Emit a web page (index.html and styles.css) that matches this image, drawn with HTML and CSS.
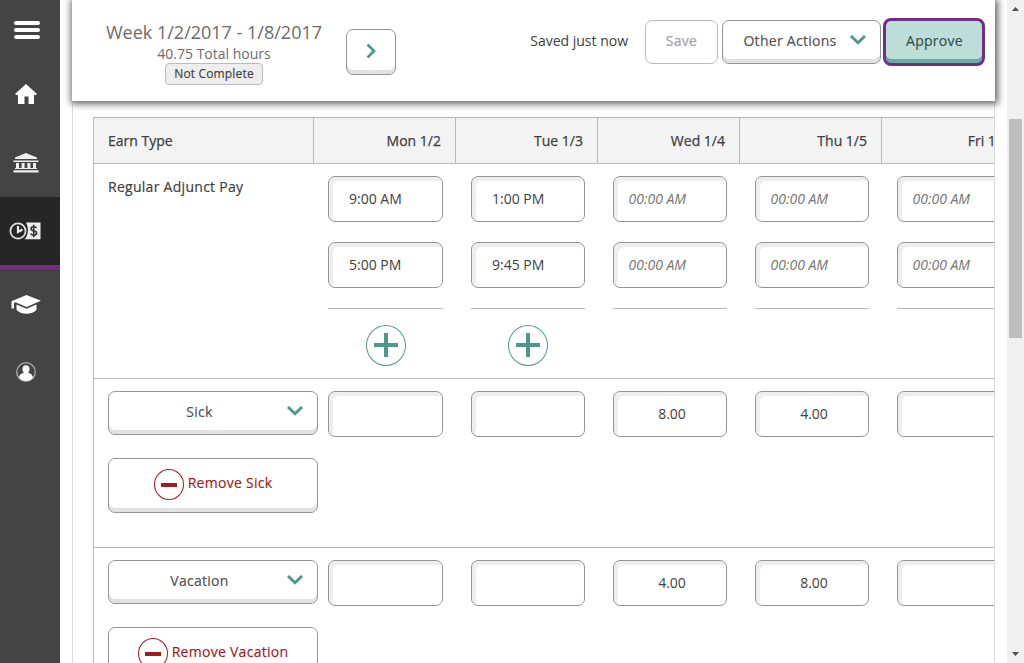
FILE: index.html
```html
<!DOCTYPE html>
<html lang="en">
<head>
<meta charset="utf-8">
<title>Timesheet</title>
<link rel="stylesheet" href="styles.css">
</head>
<body>
<div class="app">
  <nav class="sidebar">
    <a class="nav nav-menu"><svg width="26" height="20" viewBox="0 0 26 20"><path d="M2 3h22M2 10h22M2 17h22" stroke="#fff" stroke-width="4" stroke-linecap="round"/></svg></a>
    <a class="nav nav-home"><svg width="22" height="20" viewBox="0 0 22 20"><path fill="#fff" d="M11 0 22 10l-1.500 1.300L19 10.500V20h-5.500v-7.500h-4V20H3v-9.500L1.500 11.300 0 10z"/></svg></a>
    <a class="nav nav-bank"><svg width="26" height="20" viewBox="0 0 26 20"><path fill="#eee" d="M13 0 24 4.500V6H2V4.500zM0.500 7.500h25V9H0.500zM3 10h3v5H3zm5.600 0h3v5h-3zm5.800 0h3v5h-3zm5.600 0h3v5h-3zM2 15h22v1H2zM0.500 17.300h25v2.300H0.500z"/></svg></a>
    <a class="nav nav-time"><svg width="32" height="18" viewBox="0 0 32 18"><path fill="#eee" d="M17 .5h14.500v16.800H15.500c4-4 4.500-11 1.500-16.800z"/><circle cx="9" cy="9" r="7.600" fill="none" stroke="#ddd" stroke-width="1.800"/><path d="M9 4v6l4.500-2.500" fill="none" stroke="#eee" stroke-width="2.200"/><path d="M27.500 6c-.5-1.500-5.500-2-5.500.8s5.600 1.400 5.600 4.200-5.200 2.800-6 .6M24.700 2.700v12.500" fill="none" stroke="#333" stroke-width="1.600"/></svg></a>
    <a class="nav nav-school"><svg width="30" height="19" viewBox="0 0 30 19"><path fill="#fff" d="M15.500 0 30 5.800 15.500 12 4.500 7.200 3 8v5.500H.5V6.300zM5.500 9.500l10 4.200 10-4.200v5.300c-4 5.200-16 5.200-20 0z"/></svg></a>
    <a class="nav nav-user"><svg width="22" height="20" viewBox="0 0 22 20"><circle cx="11" cy="10" r="9.300" fill="none" stroke="#aaa" stroke-width="1.300"/><path fill="#fff" d="M11 3.300c2.300 0 3.500 1.700 3.500 3.800S13.600 10.300 13 10.800c2.600.8 4.800 1.800 4.800 4.900-3.300 4.300-10.300 4.300-13.600 0 0-3.100 2.200-4.100 4.800-4.900-.6-.5-1.500-1.600-1.500-3.700S8.700 3.300 11 3.300z"/></svg></a>
  </nav>
  <main class="page">
    <header class="topbar">
      <div class="period">
        <div class="week">Week 1/2/2017 - 1/8/2017</div>
        <div class="total">40.75 Total hours</div>
        <div class="badge">Not Complete</div>
      </div>
      <button class="btn next"><svg width="10" height="16" viewBox="0 0 10 16"><path d="M1.500 1.500 8 8 1.500 14.500" fill="none" stroke="#4d988c" stroke-width="2.700"/></svg></button>
      <div class="actions">
        <span class="saved">Saved just now</span>
        <button class="btn save">Save</button>
        <button class="btn other">Other Actions <svg width="16" height="10" viewBox="0 0 16 10"><path d="M1 1l7 6.700L15 1" fill="none" stroke="#4d988c" stroke-width="2.900"/></svg></button>
        <button class="btn approve">Approve</button>
      </div>
    </header>
    <section class="panel">
      <div class="sheet">
        <div class="row head">
          <div class="th first">Earn Type</div><div class="th">Mon 1/2</div><div class="th">Tue 1/3</div><div class="th">Wed 1/4</div><div class="th">Thu 1/5</div><div class="th">Fri 1/6</div>
        </div>
        <div class="row times">
          <div class="label">Regular Adjunct Pay</div>
          <div class="cell"><div class="input">9:00 AM</div><div class="input">5:00 PM</div><hr class="rule"><button class="add"><svg width="24" height="24"><path d="M12 0v24M0 12h24" stroke="#4d988c" stroke-width="4"/></svg></button></div>
          <div class="cell"><div class="input">1:00 PM</div><div class="input">9:45 PM</div><hr class="rule"><button class="add"><svg width="24" height="24"><path d="M12 0v24M0 12h24" stroke="#4d988c" stroke-width="4"/></svg></button></div>
          <div class="cell"><div class="input empty">00:00 AM</div><div class="input empty">00:00 AM</div><hr class="rule"></div>
          <div class="cell"><div class="input empty">00:00 AM</div><div class="input empty">00:00 AM</div><hr class="rule"></div>
          <div class="cell"><div class="input empty">00:00 AM</div><div class="input empty">00:00 AM</div><hr class="rule"></div>
        </div>
        <div class="row leave">
          <div class="label controls">
            <button class="btn select"><span class="choice">Sick</span><svg width="16" height="10" viewBox="0 0 16 10"><path d="M1 1l7 6.700L15 1" fill="none" stroke="#4d988c" stroke-width="2.900"/></svg></button>
            <button class="btn remove"><span class="minus"></span>Remove Sick</button>
          </div>
          <div class="cell"><div class="input"></div></div><div class="cell"><div class="input"></div></div><div class="cell"><div class="input hours">8.00</div></div><div class="cell"><div class="input hours">4.00</div></div><div class="cell"><div class="input"></div></div>
        </div>
        <div class="row leave">
          <div class="label controls">
            <button class="btn select"><span class="choice">Vacation</span><svg width="16" height="10" viewBox="0 0 16 10"><path d="M1 1l7 6.700L15 1" fill="none" stroke="#4d988c" stroke-width="2.900"/></svg></button>
            <button class="btn remove"><span class="minus"></span>Remove Vacation</button>
          </div>
          <div class="cell"><div class="input"></div></div><div class="cell"><div class="input"></div></div><div class="cell"><div class="input hours">4.00</div></div><div class="cell"><div class="input hours">8.00</div></div><div class="cell"><div class="input"></div></div>
        </div>
      </div>
    </section>
  </main>
  <aside class="scrollbar">
    <svg width="7" height="4"><path d="M0 4 3.500 0 7 4z" fill="#505050"/></svg>
    <div class="thumb"></div>
    <svg class="down" width="7" height="4"><path d="M0 0h7L3.500 4z" fill="#505050"/></svg>
  </aside>
</div>
</body>
</html>
```
FILE: styles.css
```css
* { box-sizing: border-box; }
body { margin: 0; overflow: hidden; font-family: "Open Sans", "Noto Sans", sans-serif; font-size: 14px; line-height: 20px; color: #404040; background: #fff; }
button { font: inherit; color: inherit; padding: 0; margin: 0; }
svg { display: block; flex: none; }
.app { display: flex; width: 1024px; height: 663px; overflow: hidden; }
.sidebar { flex: none; width: 60px; background: #444; display: flex; flex-direction: column; }
.nav { display: flex; align-items: center; justify-content: center; flex: none; padding-right: 8px; }
.nav-menu { height: 60px; padding-right: 6px; }
.nav-home { height: 68px; }
.nav-bank { height: 69px; }
.nav-time { height: 72px; padding-right: 10px; background: #262626; border-bottom: 4px solid #752f82; }
.nav-school { height: 69px; padding-top: 1px; }
.nav-user { height: 68px; }

.page { flex: none; width: 947px; padding-left: 12px; overflow: hidden; }
.topbar { position: relative; display: flex; width: 923px; height: 101px; background: #fff; box-shadow: 1px 1px 7px 2px rgba(0, 0, 0, .6); }
.period { flex: none; width: 216px; margin-left: 34px; padding-top: 20px; display: flex; flex-direction: column; align-items: center; color: #6b6b6b; white-space: nowrap; }
.week { font-size: 18px; line-height: 24px; }
.total { margin-top: 1px; line-height: 18px; }
.badge { width: 98px; height: 22px; border: 1px solid #bbb; border-radius: 4px; background: #eee; color: #404040; font-size: 12px; line-height: 19px; letter-spacing: .16px; -webkit-text-stroke: .15px; text-align: center; }
.btn { display: flex; align-items: center; justify-content: center; flex: none; border: 1px solid #949494; border-radius: 7px; background: #fff; box-shadow: inset 0 -4px #e1e1e1; letter-spacing: .28px; -webkit-text-stroke: .17px; color: #505050; white-space: nowrap; }
.next { width: 50px; height: 46px; margin: 29px 0 0 24px; padding-bottom: 2px; }
.actions { flex: 1; display: flex; align-items: flex-start; justify-content: flex-end; padding: 20px 10px 0 0; white-space: nowrap; }
.saved { margin: 11px 17px 0 0; }
.save { width: 73px; height: 44px; margin-right: 4px; border-color: #bcbcbc; box-shadow: none; color: #9e9e9e; padding-bottom: 2px; }
.other { width: 159px; height: 44px; gap: 13px; padding: 0 0 2px 6px; }
.other svg { margin-top: -3px; }
.approve { width: 102px; height: 48px; margin: -2px 0 0 2px; border: 3px solid #752f82; border-radius: 8px; background: #bfddd8; box-shadow: inset 0 -4px #69aaa3; color: #34504c; padding: 0 0 2px 1px; }

.panel { width: 923px; height: 600px; padding: 16px 0 0 20px; border: 1px solid #ddd; border-top: 0; overflow: hidden; }
.sheet { width: 935px; border: 1px solid #b9b9b9; }
.row { display: grid; grid-template-columns: 220px repeat(5, 142px); border-bottom: 1px solid #b9b9b9; }
.head { height: 46px; background: #f3f3f3; -webkit-text-stroke: .25px; }
.th { border-right: 1px solid #b9b9b9; padding: 13px 14px 0 0; text-align: right; }
.first { padding-left: 14px; text-align: left; }
.times { height: 215px; }
.leave { height: 169px; }
.label { padding: 13px 0 0 14px; letter-spacing: .28px; -webkit-text-stroke: .17px; }
.cell { padding: 12px 13px 0 15px; display: flex; flex-direction: column; }
.cell:nth-child(2) { padding: 12px 13px 0 14px; }
.input { height: 46px; margin-bottom: 20px; padding: 12px 0 0 20px; border: 1px solid #949494; border-radius: 7px; box-shadow: inset 4px 4px #eee; line-height: 20px; }
.empty { padding-left: 14.500px; font-style: italic; color: #757575; }
.hours { padding-left: 4px; text-align: center; }
.rule { width: 100%; height: 1px; margin: 0; border: 0; background: #b9b9b9; }
.add { width: 40px; height: 41px; margin: 16px auto 0; padding-bottom: 1px; border: 1px solid #4d988c; border-radius: 50%; background: #fff; display: flex; align-items: center; justify-content: center; }
.controls { display: flex; flex-direction: column; gap: 23px; padding-top: 12px; }
.select { width: 210px; height: 44px; padding: 0 14px 2px 0; }
.choice { flex: 1; padding-left: 3px; text-align: center; }
.select svg { margin-top: -3px; }
.remove { width: 210px; height: 55px; padding: 0 0 5px; gap: 4px; color: #a01c20; }
.minus { width: 30px; height: 31px; margin-top: 3px; border: 1px solid #a01c20; border-radius: 50%; display: flex; align-items: center; justify-content: center; }
.minus::before { content: ""; width: 16px; height: 4px; background: #a01c20; }

.scrollbar { flex: none; width: 17px; height: 663px; background: #f0f0f0; display: flex; flex-direction: column; align-items: center; padding: 7px 0; }
.thumb { width: 13px; height: 219px; margin-top: 108px; background: #bfbfbf; }
.down { margin-top: auto; }
```
